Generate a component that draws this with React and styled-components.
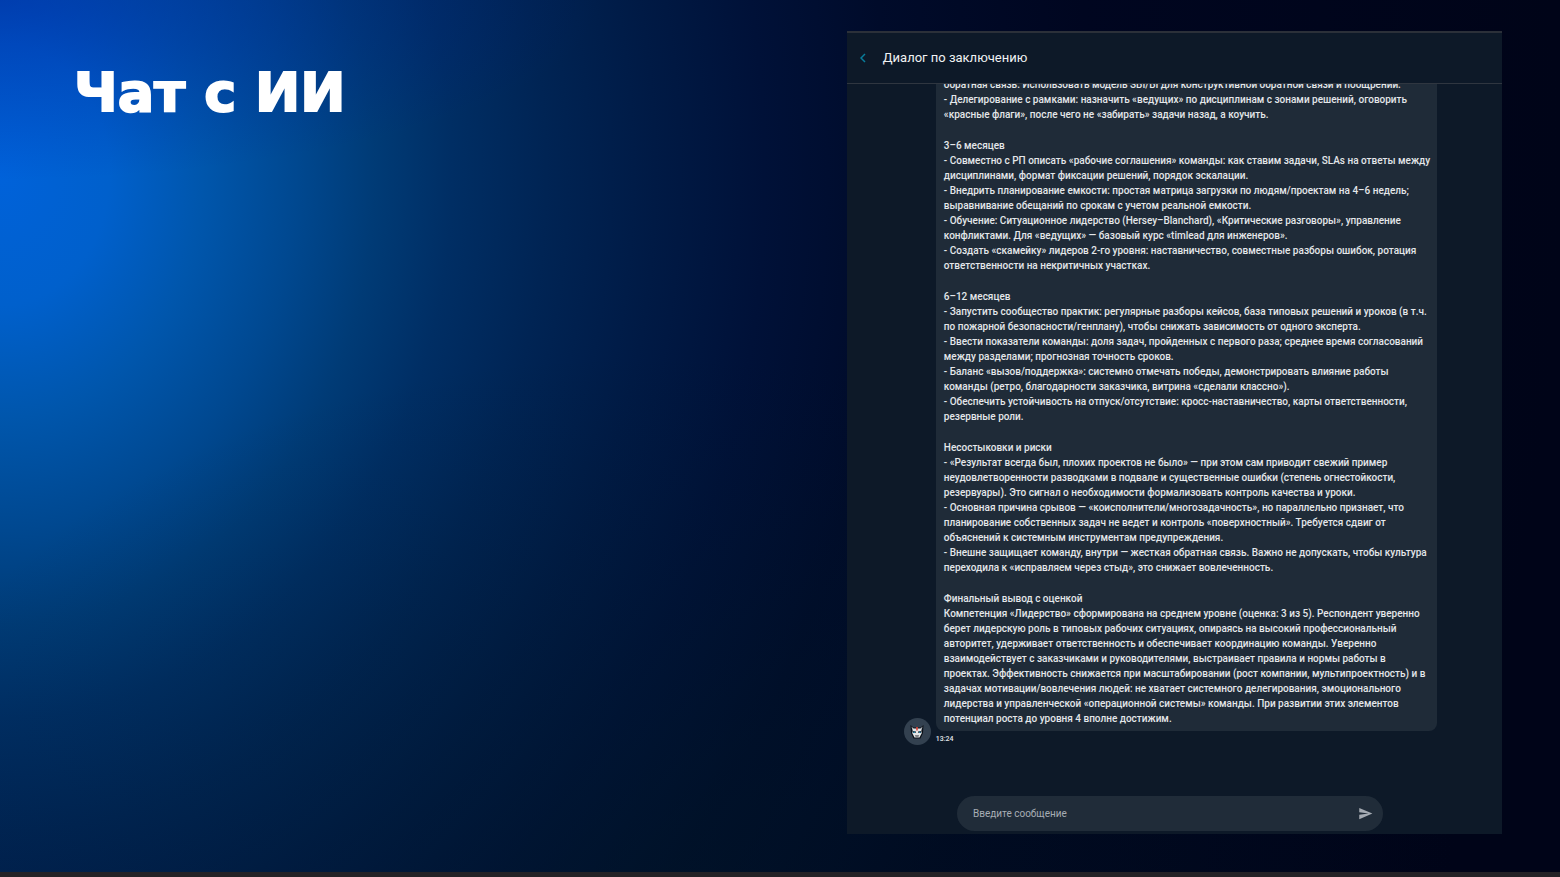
import styled, { createGlobalStyle } from "styled-components";
import { MdSend } from "react-icons/md";

const sections = [
    {
        lines: [
            "обратная связь. Использовать модель SBI/BI для конструктивной обратной связи и поощрений.",
            "- Делегирование с рамками: назначить «ведущих» по дисциплинам с зонами решений, оговорить «красные флаги», после чего не «забирать» задачи назад, а коучить.",
        ],
    },
    {
        title: "3–6 месяцев",
        lines: [
            "- Совместно с РП описать «рабочие соглашения» команды: как ставим задачи, SLAs на ответы между дисциплинами, формат фиксации решений, порядок эскалации.",
            "- Внедрить планирование емкости: простая матрица загрузки по людям/проектам на 4–6 недель; выравнивание обещаний по срокам с учетом реальной емкости.",
            "- Обучение: Ситуационное лидерство (Hersey–Blanchard), «Критические разговоры», управление конфликтами. Для «ведущих» — базовый курс «timlead для инженеров».",
            "- Создать «скамейку» лидеров 2-го уровня: наставничество, совместные разборы ошибок, ротация ответственности на некритичных участках.",
        ],
    },
    {
        title: "6–12 месяцев",
        lines: [
            "- Запустить сообщество практик: регулярные разборы кейсов, база типовых решений и уроков (в т.ч. по пожарной безопасности/генплану), чтобы снижать зависимость от одного эксперта.",
            "- Ввести показатели команды: доля задач, пройденных с первого раза; среднее время согласований между разделами; прогнозная точность сроков.",
            "- Баланс «вызов/поддержка»: системно отмечать победы, демонстрировать влияние работы команды (ретро, благодарности заказчика, витрина «сделали классно»).",
            "- Обеспечить устойчивость на отпуск/отсутствие: кросс-наставничество, карты ответственности, резервные роли.",
        ],
    },
    {
        title: "Несостыковки и риски",
        lines: [
            "- «Результат всегда был, плохих проектов не было» — при этом сам приводит свежий пример неудовлетворенности разводками в подвале и существенные ошибки (степень огнестойкости, резервуары). Это сигнал о необходимости формализовать контроль качества и уроки.",
            "- Основная причина срывов — «коисполнители/многозадачность», но параллельно признает, что планирование собственных задач не ведет и контроль «поверхностный». Требуется сдвиг от объяснений к системным инструментам предупреждения.",
            "- Внешне защищает команду, внутри — жесткая обратная связь. Важно не допускать, чтобы культура переходила к «исправляем через стыд», это снижает вовлеченность.",
        ],
    },
    {
        title: "Финальный вывод с оценкой",
        lines: [
            "Компетенция «Лидерство» сформирована на среднем уровне (оценка: 3 из 5). Респондент уверенно берет лидерскую роль в типовых рабочих ситуациях, опираясь на высокий профессиональный авторитет, удерживает ответственность и обеспечивает координацию команды. Уверенно взаимодействует с заказчиками и руководителями, выстраивает правила и нормы работы в проектах. Эффективность снижается при масштабировании (рост компании, мультипроектность) и в задачах мотивации/вовлечения людей: не хватает системного делегирования, эмоционального лидерства и управленческой «операционной системы» команды. При развитии этих элементов потенциал роста до уровня 4 вполне достижим.",
        ],
    },
];

export default function App() {
    return (
        <>
            <GlobalStyle />
            <Slide>
                <Title>Чат с ИИ</Title>
                <Chat>
                    <ChatHeader>
                        <BackButton type="button" aria-label="Назад">
                            <svg width="6" height="10" viewBox="0 0 6 10">
                                <path d="M5 1 1 5l4 4" />
                            </svg>
                        </BackButton>
                        <h2>Диалог по заключению</h2>
                    </ChatHeader>
                    <Thread>
                        <Message>
                            <Avatar>
                                <BotFace />
                            </Avatar>
                            <Bubble>
                                {sections.map(({ title, lines }, index) => (
                                    <section key={index}>
                                        {title && <h3>{title}</h3>}
                                        {lines.map((line) => (
                                            <p key={line}>{line}</p>
                                        ))}
                                    </section>
                                ))}
                            </Bubble>
                        </Message>
                        <Time>13:24</Time>
                    </Thread>
                    <Composer onSubmit={(e) => e.preventDefault()}>
                        <input
                            type="text"
                            aria-label="Введите сообщение"
                            placeholder="Введите сообщение"
                        />
                        <button type="submit" aria-label="Отправить">
                            <MdSend />
                        </button>
                    </Composer>
                </Chat>
            </Slide>
        </>
    );
}

function BotFace() {
    return (
        <svg width="16" height="16" viewBox="0 0 16 16">
            <path d="M1.500 1l3 2.500h7l3-2.500-.5 8-2.500 5.500h-7L2 9z" fill="#0b0f16" />
            <path d="M2.500 2.500l2 2-1 2zM13.500 2.500l-2 2 1 2z" fill="#b9bec4" />
            <path d="M4 4.500h8l.8 4.500-2.300 4.500h-5L3.200 9z" fill="#e4e6e8" />
            <path d="M7.200 3h1.600v3.500H7.200z" fill="#e0483a" />
            <path d="M3.500 7l3.500.5-.5 1.500H4zM12.500 7L9 7.500l.5 1.500H12z" fill="#14181f" />
            <path d="M4.300 7.700h1.700v1H4.300zM10 7.700h1.700v1H10z" fill="#27a5d8" />
            <path d="M5.800 11.500h4.400l-.8 1h-2.800z" fill="#20242b" />
        </svg>
    );
}

const GlobalStyle = createGlobalStyle`
    * {
        box-sizing: border-box;
        margin: 0;
        padding: 0;
    }

    body {
        background-color: #00041a;
        font-family: Roboto, "Liberation Sans", sans-serif;
    }
`;

const Slide = styled.main`
    align-items: stretch;
    background:
        radial-gradient(ellipse 600px 180px at 0 0, rgba(0, 16, 150, 0.4), transparent),
        radial-gradient(ellipse 800px 520px at 42% 100%, rgba(0, 28, 38, 0.4), transparent),
        radial-gradient(
            ellipse 100% 215% at 0 20%,
            #0062da 0%,
            #0060cc 7%,
            #0056ac 13%,
            #004890 19%,
            #003b76 24%,
            #002e64 29%,
            #002454 35%,
            #001a45 42%,
            #001138 49%,
            #000b2a 57%,
            #000620 70%,
            #000418 100%
        );
    border-bottom: 5px solid #242226;
    display: flex;
    height: 100vh;
    justify-content: space-between;
    padding: 31px 58px 38px 74px;
`;

const Title = styled.h1`
    -webkit-text-stroke: 2px #fff;
    color: #fff;
    font-family: "DejaVu Sans", sans-serif;
    font-size: 54px;
    font-weight: 700;
    line-height: 60px;
    margin-top: 32px;
`;

const Chat = styled.section`
    background-color: #0d1928;
    border-top: 2px solid #2b3039;
    display: flex;
    flex-direction: column;
    width: 42vw;
`;

const ChatHeader = styled.header`
    align-items: center;
    border-bottom: 1px solid #2f3640;
    display: flex;
    flex-shrink: 0;
    gap: 8px;
    height: 51px;
    padding-left: 4px;

    & h2 {
        color: #f0f2f4;
        font-size: 13px;
        font-weight: 400;
        line-height: 18px;
    }
`;

const BackButton = styled.button`
    align-items: center;
    background: none;
    border: none;
    cursor: pointer;
    display: flex;
    height: 24px;
    justify-content: center;
    width: 24px;

    & path {
        fill: none;
        stroke: #087e9c;
        stroke-width: 1.5;
    }
`;

const Thread = styled.div`
    display: flex;
    flex: 1;
    flex-direction: column;
    justify-content: flex-end;
    min-height: 0;
    overflow: hidden;
    padding: 0 65px 52px 57px;
`;

const Message = styled.article`
    align-items: flex-end;
    display: flex;
    gap: 5px;
`;

const Avatar = styled.div`
    align-items: center;
    background-color: #334150;
    border-radius: 50%;
    display: flex;
    flex-shrink: 0;
    height: 27px;
    justify-content: center;
    margin-bottom: -14px;
    width: 27px;
`;

const Bubble = styled.div`
    background-color: #1f2b38;
    border-radius: 8px;
    color: #e4e7ea;
    flex: 1;
    font-size: 10px;
    font-weight: 500;
    line-height: 15px;
    padding: 8px 5px 5px 8px;

    & section + section {
        margin-top: 16px;
    }

    & h3 {
        font-size: 10px;
        font-weight: 500;
    }
`;

const Time = styled.time`
    color: #e2e5e8;
    font-size: 7px;
    font-weight: 500;
    line-height: 10px;
    margin: 3px 0 0 32px;
`;

const Composer = styled.form`
    align-items: center;
    align-self: center;
    background-color: #202c39;
    border-radius: 18px;
    display: flex;
    flex-shrink: 0;
    height: 35px;
    margin: 0 9px 3px 0;
    padding: 0 10px 0 16px;
    width: 65%;

    & input {
        background: none;
        border: none;
        color: #eceef0;
        flex: 1;
        font-family: inherit;
        font-size: 10px;
        outline: none;
    }

    & input::placeholder {
        color: #a7adb4;
    }

    & button {
        align-items: center;
        background: none;
        border: none;
        color: #a5abb3;
        cursor: pointer;
        display: flex;
        font-size: 15px;
    }
`;
